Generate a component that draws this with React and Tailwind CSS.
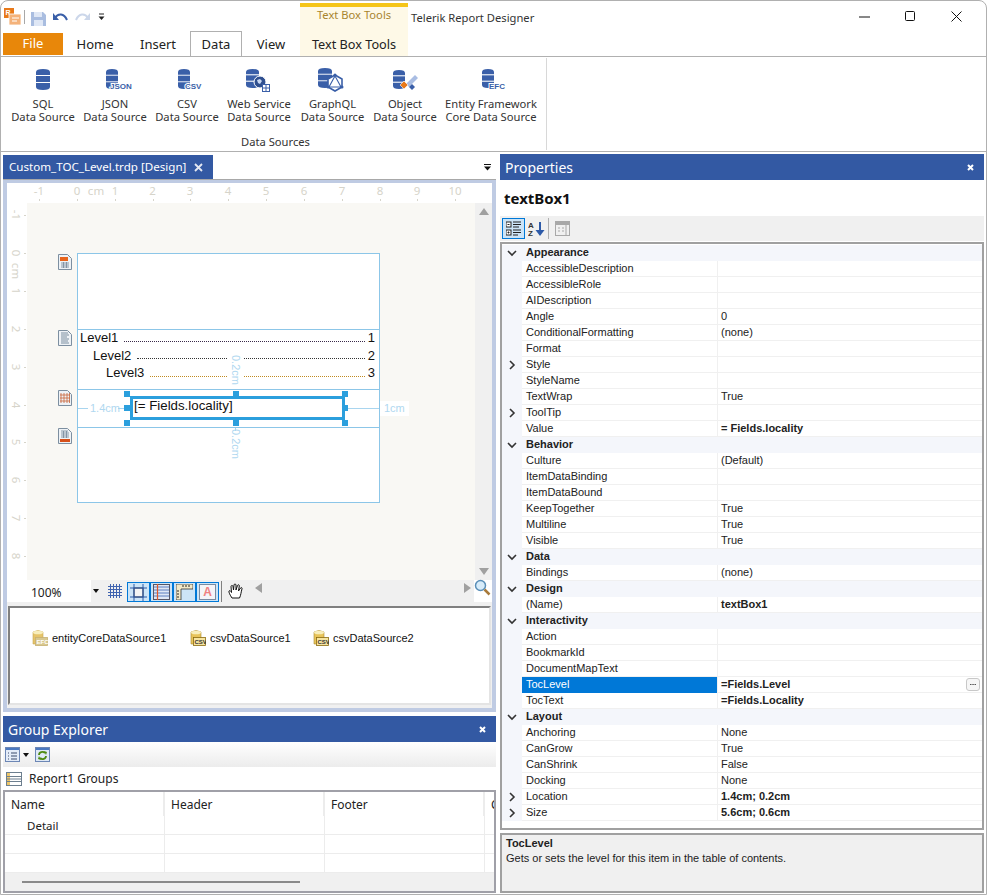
import React from "react";

const BLUE = "#3a5fa8";

function DbShape({ x, y, w, h, fill = BLUE }) {
  const seg = h / 3;
  const r = Math.min(3, w / 4);
  return (
    <g fill={fill}>
      <path d={`M${x} ${y + r}Q${x} ${y} ${x + w / 2} ${y}Q${x + w} ${y} ${x + w} ${y + r}V${y + seg - 1}H${x}Z`} />
      <rect x={x} y={y + seg} width={w} height={seg - 1} />
      <path d={`M${x} ${y + 2 * seg}H${x + w}V${y + h - r}Q${x + w} ${y + h} ${x + w / 2} ${y + h}Q${x} ${y + h} ${x} ${y + h - r}Z`} />
    </g>
  );
}

function RibbonIcon({ kind }) {
  const label = (t, x) => (
    <text x={x} y="22" fontFamily="Liberation Sans, sans-serif" fontWeight="700" fontSize="8" fill={BLUE} stroke="#fff" strokeWidth="2" paintOrder="stroke">{t}</text>
  );
  return (
    <svg width="40" height="26" viewBox="0 0 40 26" className="block">
      {kind === "sql" && <DbShape x={13} y={2} w={14} h={21} />}
      {kind === "json" && (<><DbShape x={11} y={2} w={12} h={20} />{label("JSON", 15)}</>)}
      {kind === "csv" && (<><DbShape x={11} y={2} w={12} h={20} />{label("CSV", 18)}</>)}
      {kind === "web" && (
        <>
          <DbShape x={7} y={2} w={13} h={19} />
          <circle cx="21" cy="15" r="6" fill="#2f4f8f" stroke="#fff" strokeWidth="1" />
          <path d="M18 13l3-1 2 2-2 3-2-1z" fill="#c9d8f2" />
          <rect x="23.5" y="17.5" width="7" height="7" fill="#fff" stroke={BLUE} />
          <path d="M27 17.5v7M23.5 21h7" stroke={BLUE} />
        </>
      )}
      {kind === "graphql" && (
        <>
          <DbShape x={5} y={1} w={14} h={20} />
          <path d="M22 8l7 4v8l-7 4-7-4v-8z" fill="#fff" stroke={BLUE} strokeWidth="1.6" />
          <path d="M22 9l6 11H16z" fill="none" stroke={BLUE} strokeWidth="1.1" />
          <circle cx="22" cy="8" r="1.5" fill={BLUE} /><circle cx="15" cy="20" r="1.5" fill={BLUE} /><circle cx="29" cy="20" r="1.5" fill={BLUE} />
        </>
      )}
      {kind === "object" && (
        <>
          <DbShape x={8} y={3} w={12} h={19} />
          <path d="M21 17l9-9 3 3-9 9z" fill="#a9bde3" />
          <path d="M15 18l4-4 4 4-4 4z" fill="#e8791a" stroke="#fff" strokeWidth=".6" />
          <path d="M24 20l3-3 3 3-3 3z" fill={BLUE} />
        </>
      )}
      {kind === "efc" && (<><DbShape x={11} y={2} w={12} h={19} />{label("EFC", 18)}</>)}
    </svg>
  );
}

function AppIcon() {
  return (
    <svg width="17" height="17" viewBox="0 0 17 17" className="block">
      <rect x="0" y="0" width="10" height="10" fill="#e8791a" />
      <text x="1.5" y="7" fontSize="7" fontWeight="700" fill="#fff" fontFamily="Liberation Sans, sans-serif">R</text>
      <rect x="5" y="6" width="12" height="11" fill="#f4b27a" stroke="#fff" strokeWidth=".8" />
      <path d="M8 10h7M8 13h5" stroke="#fff" strokeWidth="1.2" />
    </svg>
  );
}

function QuickAccess() {
  return (
    <div className="flex items-center h-[31px] pl-[3px]">
      <AppIcon />
      <div className="w-px h-[14px] bg-[#a8a8a8] ml-[3px]" />
      <svg width="15" height="14" viewBox="0 0 15 14" className="block ml-[6px] mt-[4px]">
        <path d="M0 0H12L15 3V14H0Z" fill="#a9bde0" />
        <rect x="3" y="0" width="8" height="5" fill="#dfe7f5" />
        <rect x="3" y="8" width="9" height="6" fill="#dfe7f5" />
      </svg>
      <svg width="15" height="12" viewBox="0 0 15 12" className="block ml-[7px] mt-[3px]">
        <path d="M2 6C5 1 11 1 14 8" fill="none" stroke={BLUE} strokeWidth="2" />
        <path d="M0 1V8H6Z" fill={BLUE} />
      </svg>
      <svg width="15" height="12" viewBox="0 0 15 12" className="block ml-[7px] mt-[3px]">
        <path d="M13 6C10 1 4 1 1 8" fill="none" stroke="#ccd7ea" strokeWidth="2" />
        <path d="M15 1V8H9Z" fill="#ccd7ea" />
      </svg>
      <svg width="7" height="8" viewBox="0 0 7 8" className="block ml-[8px] mt-[1px]">
        <path d="M1 1H6" stroke="#222" strokeWidth="1" />
        <path d="M0.5 3.5H6.5L3.5 7Z" fill="#222" />
      </svg>
    </div>
  );
}

function Tabs() {
  return (
    <div className="flex h-[24px] text-[13px] text-[#222] pl-[2px] pt-px">
      <div className="w-[60px] h-[22px] bg-[#e8870a] text-white flex items-center justify-center">File</div>
      <div className="ml-[14px] w-[36px] flex items-center justify-center h-[23px] pt-px">Home</div>
      <div className="ml-[27px] w-[36px] flex items-center justify-center h-[23px] pt-px">Insert</div>
      <div className="ml-[14px] w-[52px] h-[25px] -mt-[2px] relative z-10 bg-white border border-b-0 border-[#b0b0b0] flex items-center justify-center pt-px">Data</div>
      <div className="ml-[14px] w-[30px] flex items-center justify-center h-[23px] pt-px">View</div>
    </div>
  );
}

function Header() {
  return (
    <div className="flex h-[56px] border-b border-[#b0b0b0] shrink-0">
      <div className="w-[299px] shrink-0">
        <QuickAccess />
        <Tabs />
      </div>
      <div className="w-[108px] shrink-0 mt-[2px] border-t-[4px] border-[#f5c518] bg-[#fef9e7] flex flex-col items-center">
        <div className="text-[11.2px] leading-[16px] text-[#a8852e]">Text Box Tools</div>
        <div className="text-[12.7px] leading-[18px] text-[#222] mt-[12px]">Text Box Tools</div>
      </div>
      <div className="flex-1 flex items-start">
        <div className="ml-[3px] mt-[9px] text-[11.2px] leading-[16px] text-[#333]">Telerik Report Designer</div>
        <div className="ml-auto flex mr-[7px]">
          <div className="w-[46px] h-[30px] flex items-center justify-center">
            <svg width="11" height="2" className="block mt-[1px]"><path d="M0 1H11" stroke="#111" strokeWidth="1" /></svg>
          </div>
          <div className="w-[46px] h-[30px] flex items-center justify-center">
            <svg width="10" height="10" className="block"><rect x=".5" y=".5" width="9" height="9" rx="1" fill="none" stroke="#111" /></svg>
          </div>
          <div className="w-[46px] h-[30px] flex items-center justify-center">
            <svg width="11" height="11" className="block"><path d="M.5 .5L10.5 10.5M10.5 .5L.5 10.5" stroke="#111" /></svg>
          </div>
        </div>
      </div>
    </div>
  );
}

const SOURCES = [
  { k: "sql", a: "SQL", w: "w-[72px]" },
  { k: "json", a: "JSON", w: "w-[72px]" },
  { k: "csv", a: "CSV", w: "w-[72px]" },
  { k: "web", a: "Web Service", w: "w-[72px]" },
  { k: "graphql", a: "GraphQL", w: "w-[75px]" },
  { k: "object", a: "Object", w: "w-[70px]" },
  { k: "efc", a: "Entity Framework", b: "Core Data Source", w: "w-[102px]" },
];

function Ribbon() {
  return (
    <div className="h-[95px] border-b border-[#b0b0b0] shrink-0 flex">
      <div className="w-[546px] border-r border-[#d8d8d8] my-[1px] pl-[6px] flex flex-col">
        <div className="flex pt-[9px]">
          {SOURCES.map((s) => (
            <div key={s.k} className={`${s.w} flex flex-col items-center shrink-0`}>
              <RibbonIcon kind={s.k} />
              <div className="mt-[4px] text-[11.2px] leading-[13px] text-[#333] whitespace-nowrap text-center">
                <div>{s.a}</div>
                <div>{s.b || "Data Source"}</div>
              </div>
            </div>
          ))}
        </div>
        <div className="mt-[12px] text-center text-[11.2px] leading-[14px] text-[#333] pr-[2px]">Data Sources</div>
      </div>
    </div>
  );
}

function PanelX() {
  return (
    <svg width="7" height="7" viewBox="0 0 7 7" className="block">
      <path d="M1 1L6 6M6 1L1 6" stroke="#fff" strokeWidth="2" />
    </svg>
  );
}

function SectionIcon({ kind }) {
  return (
    <svg width="14" height="16" viewBox="0 0 14 16" className="block">
      <path d="M.5 .5H9.5L13.5 4.5V15.5H.5Z" fill="#eef2f6" stroke="#7d8fa0" />
      {kind === "head" && <rect x="2" y="3" width="8" height="4" fill="#e8641c" />}
      {kind === "foot" && <rect x="2" y="11" width="10" height="3" fill="#d6501a" />}
      {kind === "detail" ? (
        <path d="M3 3v10M6 3v10M9 3v10M11.5 3v10M2 5h10M2 8h10M2 11h10" stroke="#c8643a" strokeWidth=".8" />
      ) : kind === "toc" ? (
        <path d="M3 3h7M3 5h8M3 7h6M3 9h8M3 11h7M3 13h8" stroke="#7d8fa0" strokeWidth="1" />
      ) : (
        <path d={kind === "head" ? "M3 9h8M3 11h8M3 13h8M5.5 8v6M8.5 8v6" : "M3 3h7M3 5h8M3 7h8M3 9h8M5.5 3v7M8.5 3v7"} stroke="#7d8fa0" strokeWidth=".9" />
      )}
    </svg>
  );
}

const H_RULER = [
  ["-1", 39], ["0", 77], ["cm", 96], ["1", 115], ["2", 152.5], ["3", 190], ["4", 228], ["5", 266], ["6", 304], ["7", 342], ["8", 380], ["9", 417], ["10", 455],
];
const V_RULER = [
  ["-1", 215], ["0", 253], ["cm", 271], ["1", 291], ["2", 329], ["3", 367], ["4", 405], ["5", 442], ["6", 480], ["7", 518], ["8", 556],
];

function TocRow({ label, n, pad, color }) {
  return (
    <div className="flex items-center h-[17.5px] pr-[4px]" style={{ paddingLeft: pad }}>
      <span className="text-[#111]">{label}</span>
      <span className="flex-1 h-[6px] mt-[2px] ml-[6px] mr-[3px] border-b border-dotted" style={{ borderColor: color }} />
      <span className="text-[#111]">{n}</span>
    </div>
  );
}

function Handle({ x, y }) {
  return <div className="absolute w-[6px] h-[6px] bg-[#2b9fdd]" style={{ left: x - 78, top: y - 390 }} />;
}

const BAND = "border-x border-t border-[#8cc6e8] w-[303px] bg-white";

function BandRow({ icon, children, h, last }) {
  return (
    <div className="flex">
      <div className="w-[50px] pl-[31px] pt-px shrink-0"><SectionIcon kind={icon} /></div>
      <div className={`${BAND} ${last ? "border-b" : ""} relative`} style={{ height: h }}>{children}</div>
    </div>
  );
}

function Canvas() {
  return (
    <div className="flex-1 bg-[#f9f8f4] pt-[50px] font-['Liberation_Sans',sans-serif]">
      <BandRow icon="head" h={76} />
      <BandRow icon="toc" h={60}>
        <div className="text-[13px] leading-[17.5px] -mt-px">
          <TocRow label="Level1" n="1" pad={2} color="#3a2a4a" />
          <TocRow label="Level2" n="2" pad={15} color="#333" />
          <TocRow label="Level3" n="3" pad={28} color="#c08a20" />
        </div>
        <div className="absolute left-[150px] top-[27px] w-[16px] h-[26px] bg-white text-[11px] text-[#b0d8f0] [writing-mode:vertical-rl] flex items-center justify-center">0.2cm</div>
      </BandRow>
      <BandRow icon="detail" h={38}>
        <div className="absolute left-[52px] top-[6px] w-[215px] h-[24px] border-[3px] border-[#2b9fdd] pl-[1px] text-[13.3px] leading-[15px] text-[#111]">
          <div className="-mt-[1px]">[= Fields.locality]</div>
        </div>
        <Handle x={124} y={391} /><Handle x={233} y={391} /><Handle x={342} y={391} />
        <Handle x={124} y={405} /><Handle x={342} y={405} />
        <Handle x={124} y={420} /><Handle x={233} y={420} /><Handle x={342} y={420} />
        <div className="absolute left-0 top-[18px] w-[10px] h-px bg-[#a9d5ef]" />
        <div className="absolute left-[12px] top-[12px] text-[11px] leading-[13px] text-[#b0d8f0]">1.4cm</div>
        <div className="absolute left-[40px] top-[18px] w-[6px] h-px bg-[#a9d5ef]" />
        <div className="absolute left-[270px] top-[18px] w-[31px] h-px bg-[#a9d5ef]" />
        <div className="absolute left-[302px] top-[11px] bg-white px-[4px] text-[11px] leading-[15px] text-[#b0d8f0]">1cm</div>
      </BandRow>
      <BandRow icon="foot" h={76} last>
        <div className="absolute left-[157px] top-0 w-px h-[3px] bg-[#a9d5ef]" />
        <div className="absolute left-[150px] top-[1px] w-[16px] text-[11px] text-[#b0d8f0] [writing-mode:vertical-rl] flex items-center justify-center">0.2cm</div>
      </BandRow>
    </div>
  );
}

function Arrow({ dir, color = "#a0a0a0" }) {
  const d = { up: "M0 7L5 0L10 7Z", down: "M0 0H10L5 7Z", left: "M7 0V10L0 5Z", right: "M0 0V10L7 5Z" }[dir];
  const vert = dir === "up" || dir === "down";
  return (
    <svg width={vert ? 10 : 7} height={vert ? 7 : 10} viewBox={vert ? "0 0 10 7" : "0 0 7 10"} className="block"><path d={d} fill={color} /></svg>
  );
}

function ToggleBtn({ children }) {
  return <div className="w-[23px] h-[20px] border border-[#0078d7] bg-[#cce4f7] flex items-center justify-center">{children}</div>;
}

function DesignerToolbar() {
  return (
    <div className="flex h-[22px] shrink-0 bg-[#f0f0f0]">
      <div className="w-[21px] bg-white" />
      <div className="w-[63px] h-[22px] bg-white pl-[3px] pt-[4px] text-[12px] leading-[18px] text-[#222]">100%</div>
      <div className="w-[10px] flex items-center justify-center">
        <svg width="6" height="4" className="block"><path d="M0 0H6L3 4Z" fill="#111" /></svg>
      </div>
      <svg width="16" height="16" viewBox="0 0 16 16" className="block mt-[3px] mr-[4px] ml-[6px]">
        <path d="M3.5 1v14M6.5 1v14M9.5 1v14M12.5 1v14M1 3.5h14M1 6.5h14M1 9.5h14M1 12.5h14" stroke="#3f63b0" />
      </svg>
      <div className="flex pt-[2px]">
        <ToggleBtn>
          <svg width="17" height="17" viewBox="0 0 17 17" className="block"><rect x="4" y="4" width="9" height="9" fill="#f4f4f4" stroke="#223" /><path d="M4 0v17M13 0v17M0 4h17M0 13h17" stroke="#2d5aa8" /></svg>
        </ToggleBtn>
        <ToggleBtn>
          <svg width="17" height="16" viewBox="0 0 17 16" className="block"><rect x=".5" y=".5" width="16" height="15" fill="#dfe7f5" stroke="#556" /><path d="M1 3h15M1 6h15M1 9h15M1 12h15" stroke="#5d7fc0" /><path d="M4.5 0v16" stroke="#e2592a" strokeWidth="1.2" /></svg>
        </ToggleBtn>
        <ToggleBtn>
          <svg width="17" height="16" viewBox="0 0 17 16" className="block"><path d="M0 0H17V5H5V16H0Z" fill="#f2e9c8" stroke="#333" strokeWidth=".8" /><path d="M7 1v2M10 1v2M13 1v2M1 7h2M1 10h2M1 13h2" stroke="#222" /></svg>
        </ToggleBtn>
        <ToggleBtn>
          <div className="w-[17px] h-[16px] bg-[#f4f4f8] border border-[#7a8aa0] text-[12px] leading-[14px] font-bold text-[#f08080] text-center font-['Liberation_Sans',sans-serif]">A</div>
        </ToggleBtn>
      </div>
      <div className="w-px h-[21px] bg-[#808080] ml-[2px] mt-px" />
      <svg width="16" height="17" viewBox="0 0 16 17" className="block mt-[3px] ml-[6px]">
        <path d="M4 15C2 12 .5 9 1 8c.7-1 2 0 2.5 1.5L3 3.5c0-1.3 2-1.3 2 0L5.5 7 6 2c0-1.3 2-1.3 2 0v5L9.5 2.5c.4-1.2 2-.8 1.8.5L10.5 8l2-3c.7-1 2-.3 1.5.8C13 9 13 12 11.5 15Z" fill="#fff" stroke="#111" />
      </svg>
      <div className="w-[222px] h-[15px] ml-[8px] bg-[#f0f0f0] flex items-center justify-between px-[3px]">
        <Arrow dir="left" />
        <Arrow dir="right" />
      </div>
      <div className="flex-1 bg-[#fff] h-[22px] relative">
        <svg width="17" height="17" viewBox="0 0 17 17" className="absolute left-0 -top-[1px]">
          <circle cx="6.5" cy="6.5" r="5" fill="#d7ecfa" stroke="#5a8fb8" strokeWidth="1.5" />
          <path d="M10.5 10.5L15.5 15.5" stroke="#a87a3a" strokeWidth="2.5" />
        </svg>
      </div>
    </div>
  );
}

function TrayIcon({ t, dim }) {
  return (
    <svg width="16" height="16" viewBox="0 0 16 16" className="block shrink-0">
      <path d="M1 2Q6 -1 11 2V14H1Z" fill={dim ? "#e6c46a" : "#e8c45a"} stroke={dim ? "#c8a850" : "#a88a30"} strokeWidth=".6" />
      <ellipse cx="6" cy="2.5" rx="5" ry="1.8" fill="#f8eebb" />
      <rect x="3.5" y="7.5" width="12" height="8" fill={dim ? "#d8c890" : "#f6e4a0"} stroke={dim ? "#c8b070" : "#8a6a10"} strokeWidth=".8" />
      <text x="4.5" y="14" fontSize="6" fontWeight="700" fill={dim ? "#fff" : "#333"} fontFamily="Liberation Sans, sans-serif">{t}</text>
    </svg>
  );
}

function Tray() {
  return (
    <div className="h-[99px] mt-[4px] mx-px border-2 border-t-[#808080] border-l-[#808080] border-r-[#e4e4e4] border-b-[#e4e4e4] bg-white shrink-0 pt-[22px] pl-[22px] flex items-start text-[11px] leading-[16px] text-[#111] font-['Liberation_Sans',sans-serif]">
      <div className="flex items-center gap-[4px] w-[158px]"><TrayIcon t="EFC" dim /><span>entityCoreDataSource1</span></div>
      <div className="flex items-center gap-[4px] w-[123px]"><TrayIcon t="CSV" /><span>csvDataSource1</span></div>
      <div className="flex items-center gap-[4px]"><TrayIcon t="CSV" /><span>csvDataSource2</span></div>
    </div>
  );
}

function Designer() {
  return (
    <div className="h-[533px] border-t border-[#a8a8a8] shrink-0">
      <div className="h-full border-x-[4px] border-t-[3px] border-b-[4px] border-x-[#bfcbe3] border-y-[#bfcbe3] bg-[#f0f0f0] flex flex-col">
        <div className="h-[20px] relative bg-white shrink-0 text-[11.5px] text-[#d6d4ca]">
          {H_RULER.map(([t, x]) => (
            <React.Fragment key={t}>
              <span className="absolute top-[1px] leading-[14px] -translate-x-1/2" style={{ left: x - 7 }}>{t}</span>
              {t !== "cm" && <span className="absolute top-[16px] w-px h-[2px] bg-[#d6d4ca]" style={{ left: x - 7 }} />}
            </React.Fragment>
          ))}
        </div>
        <div className="h-[377px] flex shrink-0">
          <div className="w-[20px] relative bg-white shrink-0 text-[11.5px] text-[#d6d4ca]">
            {V_RULER.map(([t, y]) => (
              <React.Fragment key={t}>
                <span className="absolute left-[2px] leading-[14px] [writing-mode:vertical-rl] -translate-y-1/2" style={{ top: y - 203 }}>{t}</span>
                {t !== "cm" && <span className="absolute left-[17px] w-[2px] h-px bg-[#d6d4ca]" style={{ top: y - 203 }} />}
              </React.Fragment>
            ))}
          </div>
          <Canvas />
          <div className="w-[17px] bg-[#f0f0f0] shrink-0 flex flex-col items-center justify-between py-[5px]">
            <Arrow dir="up" />
            <Arrow dir="down" />
          </div>
        </div>
        <DesignerToolbar />
        <Tray />
      </div>
    </div>
  );
}

function GroupExplorer() {
  const cols = ["w-[160px]", "w-[160px]", "w-[160px]", "flex-1"];
  return (
    <div className="mt-[4px] flex-1 flex flex-col">
      <div className="h-[26px] bg-[#3359a3] text-white text-[14px] pl-[5px] flex items-center justify-between pr-[10px] shrink-0">
        <span>Group Explorer</span>
        <PanelX />
      </div>
      <div className="h-[25px] bg-gradient-to-b from-white to-[#ececec] flex items-center pl-[2px] shrink-0">
        <svg width="15" height="15" viewBox="0 0 15 15" className="block">
          <rect x=".5" y=".5" width="14" height="14" fill="#e4ecf8" stroke="#6d87b5" />
          <rect x="1" y="1" width="13" height="2" fill="#4b79c0" />
          <path d="M3 6h1M6 6h6M3 9h1M6 9h6M3 12h1M6 12h6" stroke="#3a4a6a" />
        </svg>
        <svg width="6" height="4" className="block ml-[3px]"><path d="M0 0H6L3 4Z" fill="#111" /></svg>
        <svg width="15" height="15" viewBox="0 0 15 15" className="block ml-[6px]">
          <rect x=".5" y=".5" width="14" height="14" fill="#dfe9f6" stroke="#6d87b5" />
          <rect x="1" y="1" width="13" height="2" fill="#4b79c0" />
          <path d="M4 8c0-3 4-4 6-2M11 9c0 3-4 4-6 2" fill="none" stroke="#4d8a10" strokeWidth="1.8" />
          <path d="M9 4l3 1-1 3zM6 13l-3-1 1-3z" fill="#4d8a10" />
        </svg>
      </div>
      <div className="h-[23px] flex items-center pl-[3px] text-[12px] text-[#222] shrink-0">
        <svg width="16" height="14" viewBox="0 0 16 14" className="block">
          <rect x=".5" y=".5" width="15" height="13" fill="#fff" stroke="#6d7f8f" />
          <rect x="1" y="1" width="3" height="12" fill="#eec668" />
          <path d="M1 4.5h14M1 7h14M1 9.5h14" stroke="#6d7f8f" />
        </svg>
        <span className="ml-[7px]">Report1 Groups</span>
      </div>
      <div className="h-[103px] border-2 border-[#a0a0a8] flex flex-col overflow-hidden text-[#222]">
        <div className="flex h-[24px] text-[12px] shrink-0">
          {["Name", "Header", "Footer", "C"].map((t, i) => (
            <div key={t} className={`${cols[i]} ${i < 3 ? "border-r-2 border-[#ececec]" : ""} pl-[6px] pt-[2px] flex items-center overflow-hidden`}>{t}</div>
          ))}
        </div>
        {["Detail", "", ""].map((t, r) => (
          <div key={r} className="flex h-[19px] border-b border-[#ececec] text-[11.5px] shrink-0">
            {cols.map((c, i) => (
              <div key={c + i} className={`${c} ${i < 3 ? "border-r border-[#ececec]" : ""} ${i === 0 ? "pl-[22px] pt-[1px]" : ""} flex items-center`}>{i === 0 ? t : ""}</div>
            ))}
          </div>
        ))}
        <div className="flex-1 bg-[#f0f0f0] flex items-center pl-[17px]">
          <div className="w-[278px] h-[2px] bg-[#8a8a8a]" />
        </div>
      </div>
    </div>
  );
}

const PROPS = [
  { cat: "Appearance" },
  { n: "AccessibleDescription" },
  { n: "AccessibleRole" },
  { n: "AIDescription" },
  { n: "Angle", v: "0" },
  { n: "ConditionalFormatting", v: "(none)" },
  { n: "Format" },
  { n: "Style", exp: true },
  { n: "StyleName" },
  { n: "TextWrap", v: "True" },
  { n: "ToolTip", exp: true },
  { n: "Value", v: "= Fields.locality", b: true },
  { cat: "Behavior" },
  { n: "Culture", v: "(Default)" },
  { n: "ItemDataBinding" },
  { n: "ItemDataBound" },
  { n: "KeepTogether", v: "True" },
  { n: "Multiline", v: "True" },
  { n: "Visible", v: "True" },
  { cat: "Data" },
  { n: "Bindings", v: "(none)" },
  { cat: "Design" },
  { n: "(Name)", v: "textBox1", b: true },
  { cat: "Interactivity" },
  { n: "Action" },
  { n: "BookmarkId" },
  { n: "DocumentMapText" },
  { n: "TocLevel", v: "=Fields.Level", b: true, sel: true },
  { n: "TocText", v: "=Fields.Locality", b: true },
  { cat: "Layout" },
  { n: "Anchoring", v: "None" },
  { n: "CanGrow", v: "True" },
  { n: "CanShrink", v: "False" },
  { n: "Docking", v: "None" },
  { n: "Location", v: "1.4cm; 0.2cm", b: true, exp: true },
  { n: "Size", v: "5.6cm; 0.6cm", b: true, exp: true },
];

function Chevron({ open }) {
  return (
    <svg width="10" height="10" viewBox="0 0 10 10" className="block">
      <path d={open ? "M1 3L5 7L9 3" : "M3 1L7 5L3 9"} fill="none" stroke="#333" strokeWidth="1.6" />
    </svg>
  );
}

function PropRow({ p }) {
  if (p.cat) {
    return (
      <div className="h-[16px] bg-[#f4f6fb] flex font-bold text-[#222] leading-[15px]">
        <div className="w-[20px] flex items-center justify-center shrink-0"><Chevron open /></div>
        <div className="pl-[4px]">{p.cat}</div>
      </div>
    );
  }
  return (
    <div className="h-[16px] flex text-[#222]">
      <div className="w-[20px] bg-[#f4f6fb] shrink-0 flex items-center justify-center">{p.exp && <Chevron />}</div>
      <div className={`w-[195px] shrink-0 pl-[4px] leading-[15px] border-b ${p.sel ? "bg-[#0078d7] text-white border-[#0078d7]" : "border-[#f0f0f0]"}`}>{p.n}</div>
      <div className={`flex-1 relative pl-[3px] leading-[15px] border-b border-l border-[#f0f0f0] ${p.b ? "font-bold" : ""}`}>
        {p.v}
        {p.sel && (
          <div className="absolute right-[2px] top-px w-[14px] h-[13px] border border-[#c8c8c8] rounded-[3px] bg-[#f6f6f6] flex items-center justify-center">
            <svg width="6" height="2" className="block"><path d="M0 .5h1.5M2.3 .5h1.5M4.5 .5h1.5" stroke="#555" /></svg>
          </div>
        )}
      </div>
    </div>
  );
}

function Properties() {
  return (
    <div className="w-[484px] shrink-0 ml-[4px] pt-[2px] flex flex-col">
      <div className="h-[26px] bg-[#3359a3] text-white text-[14px] pl-[5px] flex items-center justify-between pr-[10px] shrink-0">
        <span>Properties</span>
        <PanelX />
      </div>
      <div className="h-[36px] flex items-center pl-[4px] pt-[1px] text-[15px] font-bold text-[#111] shrink-0">textBox1</div>
      <div className="h-[25px] bg-[#f0f0f0] flex items-center pl-[2px] shrink-0">
        <div className="w-[23px] h-[21px] border border-[#0078d7] bg-[#cce4f7] flex items-center justify-center">
          <svg width="15" height="15" viewBox="0 0 15 15" className="block">
            <rect x="0" y="1" width="5" height="5" fill="#fff" stroke="#222" />
            <rect x="0" y="9" width="5" height="5" fill="#fff" stroke="#222" />
            <path d="M1.5 3.5h2M1.5 11.5h2M2.5 10.5v2M7 1h8M7 3.5h8M7 6h6M7 9h8M7 11.5h8M7 14h5" stroke="#222" />
          </svg>
        </div>
        <svg width="17" height="17" viewBox="0 0 17 17" className="block ml-[3px]">
          <text x="0" y="7.5" fontSize="8" fontWeight="700" fill="#333" fontFamily="Liberation Sans, sans-serif">A</text>
          <text x="0" y="16" fontSize="8" fontWeight="700" fill="#333" fontFamily="Liberation Sans, sans-serif">Z</text>
          <path d="M12 2v11" stroke="#2d5aa8" strokeWidth="2" />
          <path d="M7.5 10H16.5L12 16Z" fill="#2d5aa8" />
        </svg>
        <div className="w-px h-[21px] bg-[#b0b0b0] ml-[3px]" />
        <svg width="15" height="15" viewBox="0 0 15 15" className="block ml-[6px]">
          <rect x=".5" y=".5" width="14" height="14" fill="#f0f0f0" stroke="#a8a8a8" />
          <rect x="1" y="1" width="13" height="3" fill="#a8a8a8" />
          <path d="M3 7h2M7 7h2M3 10h2M7 10h2" stroke="#a8a8a8" />
          <path d="M11 4v10" stroke="#a8a8a8" />
        </svg>
      </div>
      <div className="mt-px h-[588px] border-2 border-[#a0a0a0] pt-px text-[11px] font-['Liberation_Sans',sans-serif] shrink-0">
        {PROPS.map((p) => <PropRow key={p.n || p.cat} p={p} />)}
      </div>
      <div className="mt-[3px] h-[60px] bg-[#f0f0f0] border-2 border-[#a0a0a0] px-[4px] pt-[1px] text-[11px] leading-[15px] text-[#222] font-['Liberation_Sans',sans-serif] shrink-0">
        <div className="font-bold">TocLevel</div>
        <div>Gets or sets the level for this item in the table of contents.</div>
      </div>
    </div>
  );
}

export default function App() {
  return (
    <div className="w-[987px] h-[895px] bg-white border border-[#b0b0b0] rounded-t-lg overflow-hidden flex flex-col font-['Noto_Sans',sans-serif]">
      <Header />
      <Ribbon />
      <div className="flex flex-1 pl-[2px] min-h-0">
        <div className="w-[493px] shrink-0 flex flex-col pt-[3px]">
          <div className="flex h-[24px] shrink-0">
            <div className="w-[210px] bg-[#3359a3] text-white text-[11.6px] pl-[6px] flex items-center whitespace-nowrap">
              <span className="w-[176px] shrink-0">Custom_TOC_Level.trdp [Design]</span>
              <svg width="9" height="9" viewBox="0 0 9 9" className="block ml-[9px] shrink-0"><path d="M1 1L8 8M8 1L1 8" stroke="#e4e8f2" strokeWidth="1.8" /></svg>
            </div>
            <div className="ml-auto mr-[5px] flex items-center">
              <svg width="7" height="7" viewBox="0 0 7 7" className="block"><path d="M0 .5H7" stroke="#111" /><path d="M0 2.5H7L3.5 6.5Z" fill="#111" /></svg>
            </div>
          </div>
          <Designer />
          <GroupExplorer />
        </div>
        <Properties />
      </div>
    </div>
  );
}
